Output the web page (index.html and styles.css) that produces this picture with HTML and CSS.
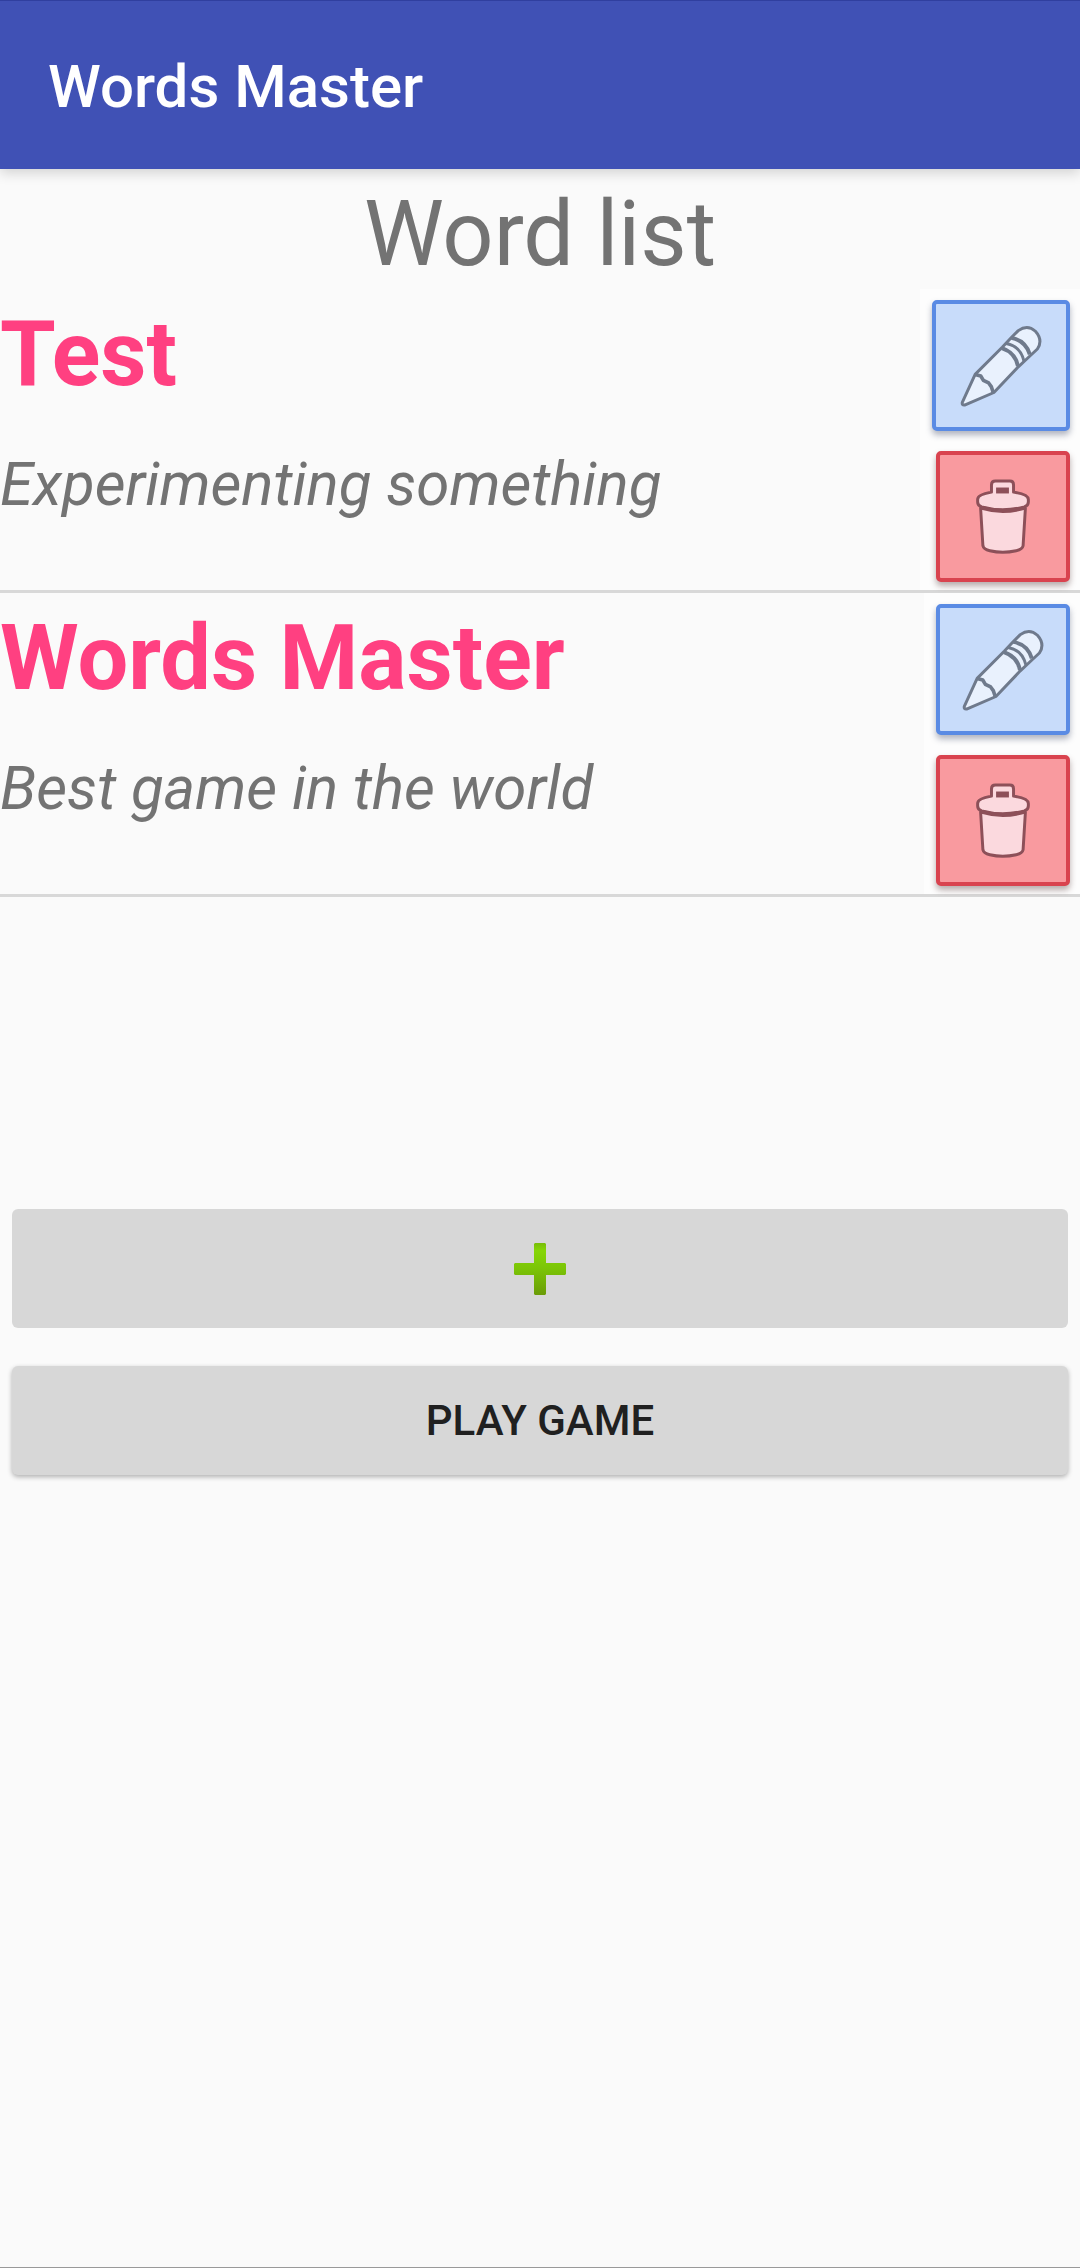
FILE: index.html
```html
<!DOCTYPE html>
<html lang="en">
<head>
<meta charset="utf-8">
<meta name="viewport" content="width=device-width, initial-scale=1">
<title>Words Master</title>
<link rel="stylesheet" href="styles.css">
</head>
<body>
<svg class="symbols" aria-hidden="true">
  <symbol id="pencil" viewBox="135 115 249 249">
    <path d="M181 265 L264 182 L291 153 L312 132 Q340 112 364 134 Q388 161 370 188 L340 216 L312 242 L238 320 L149 358 Q140 359 142 350 Z" fill="#e9f1fd" stroke="#6f7a8c" stroke-width="9" stroke-linejoin="round"/>
    <path d="M262 185 Q303 198 311 240 M291 154 Q334 162 347 204" fill="none" stroke="#6f7a8c" stroke-width="12"/>
    <path d="M275 171 Q318 178 329 224" fill="none" stroke="#6f7a8c" stroke-width="9"/>
    <path d="M181 265 L198 270 L206 283 L222 291 L230 302 L236 320" fill="none" stroke="#6f7a8c" stroke-width="11" stroke-linejoin="round"/>
  </symbol>
  <symbol id="trash" viewBox="187 127 164 226">
    <path d="M201 215 L208 329 Q210 340 229 344 Q268 353 309 344 Q328 340 330 329 L337 215 Z" fill="#fbd9de" stroke="#8d5059" stroke-width="9" stroke-linejoin="round"/>
    <path d="M234 166 V144 Q234 132 246 132 H290 Q301 132 301 144 V166 Q346 173 346 188 V196 Q346 207 334 211 Q268 228 204 211 Q192 207 192 196 V188 Q192 173 234 166 Z" fill="#fbd9de" stroke="#8d5059" stroke-width="9" stroke-linejoin="round"/>
    <path d="M202 213 Q268 233 336 213" fill="none" stroke="#8d5059" stroke-width="12"/>
    <rect x="248" y="152" width="39" height="18" fill="#8d5059"/>
  </symbol>
</svg>

<header class="app-bar">
  <h1 class="app-title">Words Master</h1>
</header>

<main class="screen">
  <h2 class="list-title">Word list</h2>

  <ul class="word-list">
    <li class="word">
      <div class="word-text">
        <h3 class="word-name">Test</h3>
        <p class="word-hint">Experimenting something</p>
      </div>
      <div class="word-actions">
        <button class="icon-button edit wide" type="button" aria-label="Edit Test"><svg class="pencil"><use href="#pencil"/></svg></button>
        <button class="icon-button delete" type="button" aria-label="Delete Test"><svg class="trash"><use href="#trash"/></svg></button>
      </div>
    </li>
    <li class="word">
      <div class="word-text">
        <h3 class="word-name">Words Master</h3>
        <p class="word-hint">Best game in the world</p>
      </div>
      <div class="word-actions">
        <button class="icon-button edit" type="button" aria-label="Edit Words Master"><svg class="pencil"><use href="#pencil"/></svg></button>
        <button class="icon-button delete" type="button" aria-label="Delete Words Master"><svg class="trash"><use href="#trash"/></svg></button>
      </div>
    </li>
  </ul>

  <div class="controls">
    <button class="control add" type="button" aria-label="Add word">
      <svg class="plus" viewBox="0 0 52 52">
        <defs>
          <linearGradient id="leaf" x1="0" y1="0" x2="0" y2="1">
            <stop offset="0" stop-color="#78bd08"/>
            <stop offset="0.15" stop-color="#86d606"/>
            <stop offset="0.5" stop-color="#7bc406"/>
            <stop offset="1" stop-color="#6b9c08"/>
          </linearGradient>
        </defs>
        <path d="M21 0h10l1 1v19h19l1 1v10l-1 1H32v19l-1 1H21l-1-1V32H1l-1-1V21l1-1h19V1z" fill="url(#leaf)"/>
      </svg>
    </button>
    <button class="control play" type="button">PLAY GAME</button>
  </div>
</main>
</body>
</html>
```
FILE: styles.css
```css
* {
  box-sizing: border-box;
}

body {
  display: flex;
  flex-direction: column;
  min-height: 100vh;
  margin: 0;
  background: #fafafa;
  border-bottom: 1px solid #999;
  color: #737373;
  font-family: Roboto, "Noto Sans", sans-serif;
}

h1,
h2,
h3,
p,
ul {
  margin: 0;
  padding: 0;
}

button {
  padding: 0;
  border: 0;
  font: inherit;
}

.symbols {
  position: absolute;
  width: 0;
  height: 0;
}

.app-bar {
  padding: 46px 48px 42px;
  background: #4051b5;
  border-top: 1px solid #303f9f;
  box-shadow: 0 4px 12px rgba(0, 0, 0, 0.16);
}

.app-title {
  color: #fff;
  font-size: 60px;
  font-weight: 500;
  line-height: 80px;
}

.list-title {
  padding-top: 12px;
  font-size: 90px;
  font-weight: 400;
  line-height: 108px;
  text-align: center;
}

.word-list {
  list-style: none;
}

.word {
  display: flex;
  justify-content: space-between;
  border-bottom: 3px solid #d8d8d8;
}

.word-text {
  padding-top: 6px;
}

.word-name {
  color: #ff4081;
  font-size: 90px;
  font-weight: 700;
  line-height: 120px;
}

.word-hint {
  margin-top: 30px;
  font-size: 60px;
  font-style: italic;
  line-height: 80px;
}

.word-actions {
  display: flex;
  flex-direction: column;
  align-items: flex-end;
  gap: 20px;
  padding: 11px 10px 8px 12px;
  background: #fdfdfd;
}

.icon-button {
  display: flex;
  align-items: center;
  justify-content: center;
  width: 134px;
  height: 131px;
  border: 4px solid;
  border-radius: 5px;
}

.icon-button.wide {
  width: 138px;
}

.edit {
  background: #c8dcfa;
  border-color: #5a8be4;
  box-shadow: 0 4px 6px rgba(60, 70, 100, 0.4);
}

.delete {
  background: #f99a9f;
  border-color: #d9434f;
  box-shadow: 0 4px 6px rgba(80, 50, 50, 0.4);
}

.pencil {
  width: 82px;
  height: 82px;
}

.trash {
  width: 54px;
  height: 75px;
}

.controls {
  display: flex;
  flex-direction: column;
  gap: 38px;
  margin-top: 312px;
  padding: 0 12px;
}

.control {
  display: flex;
  align-items: center;
  justify-content: center;
  width: 100%;
  background: #d7d7d7;
  border-radius: 6px;
  color: #202020;
}

.add {
  height: 119px;
}

.plus {
  width: 52px;
  height: 52px;
}

.play {
  height: 109px;
  box-shadow: 0 2px 5px rgba(0, 0, 0, 0.3);
  font-size: 42px;
  font-weight: 500;
  line-height: 56px;
}
```
